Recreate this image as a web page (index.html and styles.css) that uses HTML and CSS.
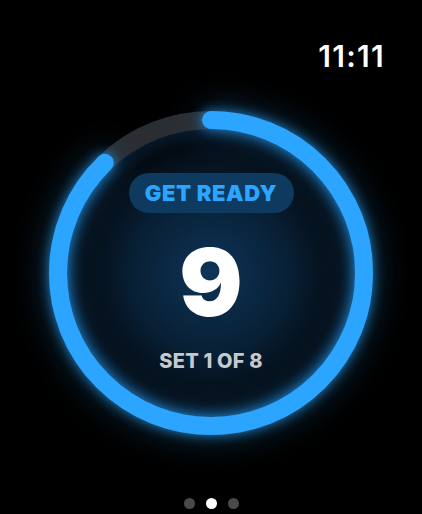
FILE: index.html
```html
<!DOCTYPE html>
<html lang="en">
<head>
    <meta charset="UTF-8">
    <meta name="viewport" content="width=device-width, initial-scale=1.0">
    <title>Interval Timer</title>
    <link rel="stylesheet" href="styles.css">
</head>
<body>
    <div class="screen">
        <div class="status">
            <span class="time">11:11</span>
        </div>

        <div class="ring">
            <svg class="ring-svg" width="360" height="360" viewBox="0 0 360 360">
                <defs>
                    <radialGradient id="innerGlow" cx="50%" cy="50%" r="50%">
                        <stop offset="0%" stop-color="#0d3457"/>
                        <stop offset="55%" stop-color="#081f34"/>
                        <stop offset="88%" stop-color="#030a12"/>
                        <stop offset="100%" stop-color="#06192b"/>
                    </radialGradient>
                </defs>
                <circle cx="180" cy="180" r="146" fill="url(#innerGlow)"/>
                <circle class="track" cx="180" cy="180" r="153"/>
                <!-- progress starts at 12 o'clock and runs clockwise -->
                <circle class="progress" cx="180" cy="180" r="153"
                        pathLength="100" stroke-dasharray="87.8 100"
                        transform="rotate(-90 180 180)"/>
            </svg>

            <div class="ring-content">
                <div class="badge">GET READY</div>
                <div class="count">9</div>
                <div class="set">SET 1 OF 8</div>
            </div>
        </div>

        <div class="dots">
            <span class="dot"></span>
            <span class="dot active"></span>
            <span class="dot"></span>
        </div>
    </div>
</body>
</html>
```

FILE: styles.css
```css
* {
    box-sizing: border-box;
    margin: 0;
    padding: 0;
}

body {
    background-color: #000;
    font-family: 'Inter', 'Roboto', sans-serif;
    width: 422px;
    height: 514px;
    overflow: hidden;
}

.screen {
    display: flex;
    flex-direction: column;
    align-items: center;
    height: 514px;
}

.status {
    align-self: stretch;
    display: flex;
    justify-content: flex-end;
    padding: 41px 38px 0 0;
}

.time {
    color: #fff;
    font-size: 30px;
    font-weight: 600;
    line-height: 30px;
    letter-spacing: 1.3px;
    margin-right: -1px;
}

.ring {
    display: grid;
    margin-top: 22px;
    width: 360px;
    height: 360px;
}

.ring-svg,
.ring-content {
    grid-area: 1 / 1;
}

.ring-svg {
    overflow: visible;
}

.track {
    fill: none;
    stroke: #2a2d32;
    stroke-width: 18;
}

.progress {
    fill: none;
    stroke: #2ba5ff;
    stroke-width: 18;
    stroke-linecap: round;
    filter: drop-shadow(0 0 6px rgba(43, 165, 255, 0.75)) drop-shadow(0 0 16px rgba(43, 165, 255, 0.35));
}

.ring-content {
    display: flex;
    flex-direction: column;
    align-items: center;
    padding-top: 80px;
}

.badge {
    display: flex;
    align-items: center;
    justify-content: center;
    width: 165px;
    height: 40px;
    border-radius: 20px;
    background-color: #0d3a5e;
    color: #2ba5ff;
    font-size: 22px;
    font-weight: 900;
    letter-spacing: 0.6px;
}

.count {
    margin-top: 22px;
    color: #fff;
    font-size: 94px;
    font-weight: 900;
    line-height: 94px;
}

.set {
    margin-top: 22px;
    color: #c4c9cf;
    font-size: 20px;
    font-weight: 800;
    line-height: 20px;
    letter-spacing: 0.2px;
}

.dots {
    display: flex;
    gap: 11px;
    margin-top: 45px;
}

.dot {
    width: 11px;
    height: 11px;
    border-radius: 50%;
    background-color: #4a4a4c;
}

.dot.active {
    background-color: #fff;
}
```
